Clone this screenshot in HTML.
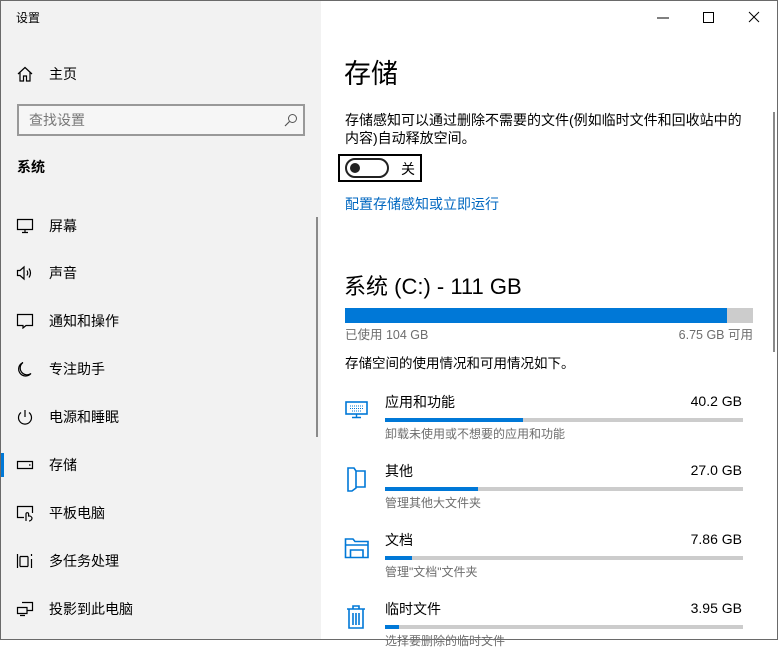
<!DOCTYPE html>
<html><head><meta charset="utf-8"><style>
*{margin:0;padding:0;box-sizing:border-box}
body{width:778px;height:640px;overflow:hidden;font-family:"Liberation Sans","Noto Sans CJK SC",sans-serif;color:#000;background:#fff;position:relative}
.a{position:absolute;white-space:nowrap}
#left{position:absolute;left:0;top:0;width:321px;height:640px;background:#f2f2f2}
.nav{font-size:14px;left:49px}
.ic{position:absolute;left:16px}
.bar{position:absolute;height:4px;background:#ccc}
.bar i{display:block;height:100%;background:#0078d7}
.sm{font-size:12px;color:#6d6d6d}
.frame{position:absolute;left:0;top:0;width:778px;height:640px;border:1px solid #6a6a6a;pointer-events:none}
</style></head><body>
<div id="left">
<div class="a" style="left:16px;top:9px;font-size:12px">设置</div>
<svg class="ic" style="top:66px" width="18" height="16" viewBox="0 0 18 16"><path d="M2 8 L9 1.5 L16 8 M4 6.5 V15 H7.5 V10 H10.5 V15 H14 V6.5" fill="none" stroke="#000" stroke-width="1.2"/></svg>
<div class="a nav" style="top:64px">主页</div>
<div style="position:absolute;left:17px;top:104px;width:288px;height:32px;border:2px solid #999;background:#f6f6f6"></div>
<div class="a" style="left:29px;top:110px;font-size:14px;color:#777">查找设置</div>
<svg class="a" style="left:284px;top:113px" width="14" height="14" viewBox="0 0 14 14"><circle cx="8.5" cy="5.5" r="4" fill="none" stroke="#555" stroke-width="1"/><path d="M5.5 8.5 L1 13" stroke="#555" stroke-width="1.2"/></svg>
<div class="a" style="left:17px;top:157px;font-size:14px;font-weight:bold">系统</div>
<div style="position:absolute;left:316px;top:217px;width:2px;height:220px;background:#8a8a8a"></div>
<svg class="ic" style="top:218px" width="18" height="16"><path d="M1.5 1.5H16.5V11.5H1.5Z M9 11.5V14 M6 14.5H12" fill="none" stroke="#000" stroke-width="1.2"/></svg>
<div class="a nav" style="top:216px">屏幕</div>
<svg class="ic" style="top:265px" width="18" height="16"><path d="M1.5 5.5H4L8 2V14L4 10.5H1.5Z M11 5.5Q12.5 8 11 10.5 M13 3.5Q16 8 13 12.5" fill="none" stroke="#000" stroke-width="1.2"/></svg>
<div class="a nav" style="top:263px">声音</div>
<svg class="ic" style="top:313px" width="18" height="16"><path d="M1.5 1.5H16.5V12.5H10L7 15V12.5H1.5Z" fill="none" stroke="#000" stroke-width="1.2"/></svg>
<div class="a nav" style="top:311px">通知和操作</div>
<svg class="ic" style="top:361px" width="18" height="17"><path d="M7 1.5A7 7 0 1 0 15 12.5 A6 6 0 0 1 7 1.5Z" fill="none" stroke="#000" stroke-width="1.2"/></svg>
<div class="a nav" style="top:359px">专注助手</div>
<svg class="ic" style="top:409px" width="18" height="17"><path d="M5 3.5A6.5 6.5 0 1 0 13 3.5 M9 1V8" fill="none" stroke="#000" stroke-width="1.2"/></svg>
<div class="a nav" style="top:407px">电源和睡眠</div>
<div style="position:absolute;left:0;top:453px;width:4px;height:24px;background:#0078d7"></div>
<svg class="ic" style="top:458px" width="18" height="14"><path d="M1.5 3.5H16.5V10.5H1.5Z M13 7H14.5" fill="none" stroke="#000" stroke-width="1.2"/></svg>
<div class="a nav" style="top:455px">存储</div>
<svg class="ic" style="top:505px" width="18" height="17"><path d="M8 12.5H1.5V1.5H16.5V8 M10 16V9A1.3 1.3 0 0 1 12.6 9V11 A3 3 0 0 1 16 13 A3 3 0 0 1 13 16" fill="none" stroke="#000" stroke-width="1.2"/></svg>
<div class="a nav" style="top:503px">平板电脑</div>
<svg class="ic" style="top:553px" width="18" height="17"><path d="M1.5 1V15 M4 3.5H12 M4 13.5H12 M4 3.5V13.5 M12 3.5V13.5 M15.5 1V3 M15.5 6V15" fill="none" stroke="#000" stroke-width="1.2"/></svg>
<div class="a nav" style="top:551px">多任务处理</div>
<svg class="ic" style="top:601px" width="18" height="16"><path d="M6 1.5H16.5V9.5H11 M1.5 6.5H11V12.5H1.5Z M4 14.5H9" fill="none" stroke="#000" stroke-width="1.2"/></svg>
<div class="a nav" style="top:599px">投影到此电脑</div>
</div>

<svg class="a" style="left:652px;top:10px" width="110" height="16"><path d="M5 8H17" stroke="#000" stroke-width="1"/><rect x="51.5" y="2.5" width="10" height="10" fill="none" stroke="#000"/><path d="M97 2L107 12M107 2L97 12" stroke="#000" stroke-width="1"/></svg>
<div style="position:absolute;left:773px;top:112px;width:2px;height:240px;background:#8a8a8a"></div>

<div class="a" style="left:344px;top:52px;font-size:27px">存储</div>
<div class="a" style="left:345px;top:111px;font-size:14px;line-height:18px">存储感知可以通过删除不需要的文件(例如临时文件和回收站中的<br>内容)自动释放空间。</div>
<div style="position:absolute;left:338px;top:154px;width:84px;height:28px;border:2px solid #000"></div>
<div style="position:absolute;left:345px;top:158px;width:44px;height:20px;border:2px solid #222;border-radius:10px"></div>
<div style="position:absolute;left:350px;top:163px;width:10px;height:10px;border-radius:50%;background:#222"></div>
<div class="a" style="left:401px;top:159px;font-size:14px">关</div>
<div class="a" style="left:345px;top:194px;font-size:14px;color:#0067c0">配置存储感知或立即运行</div>

<div class="a" style="left:344px;top:269px;font-size:22px">系统 (C:) - 111 GB</div>
<div class="bar" style="left:345px;top:308px;width:408px;height:15px"><i style="width:382px"></i></div>
<div class="a sm" style="left:345px;top:324px;font-size:12.5px">已使用 104 GB</div>
<div class="a sm" style="right:25px;top:324px;font-size:12.5px">6.75 GB 可用</div>
<div class="a" style="left:345px;top:352px;font-size:13.5px">存储空间的使用情况和可用情况如下。</div>

<svg class="a" style="left:345px;top:401px" width="24" height="18"><rect x="1" y="1" width="21" height="12" fill="none" stroke="#0078d7" stroke-width="1.6"/><path d="M11.5 13V16 M7 16.5H16" stroke="#0078d7" stroke-width="1.4"/><path d="M5 5H18 M5 7.5H18 M7 10H16" stroke="#0078d7" stroke-width="1" stroke-dasharray="1 1"/></svg>
<div class="a" style="left:385px;top:392px;font-size:14px">应用和功能</div>
<div class="a" style="right:36px;top:393px;font-size:14px">40.2 GB</div>
<div class="bar" style="left:385px;top:418px;width:358px"><i style="width:138px"></i></div>
<div class="a sm" style="left:385px;top:425px">卸载未使用或不想要的应用和功能</div>

<svg class="a" style="left:346px;top:466px" width="22" height="26"><path d="M2 2H8L10 5V22L6 25H2Z M10 5H19V21H10" fill="none" stroke="#0078d7" stroke-width="1.6"/></svg>
<div class="a" style="left:385px;top:461px;font-size:14px">其他</div>
<div class="a" style="right:36px;top:462px;font-size:14px">27.0 GB</div>
<div class="bar" style="left:385px;top:487px;width:358px"><i style="width:93px"></i></div>
<div class="a sm" style="left:385px;top:494px">管理其他大文件夹</div>

<svg class="a" style="left:344px;top:537px" width="26" height="22"><path d="M1.5 2H9L11 4.5H24V20.5H1.5Z M6.5 20.5V13H19V20.5 M1.5 8H24" fill="none" stroke="#0078d7" stroke-width="1.6"/></svg>
<div class="a" style="left:385px;top:530px;font-size:14px">文档</div>
<div class="a" style="right:36px;top:531px;font-size:14px">7.86 GB</div>
<div class="bar" style="left:385px;top:556px;width:358px"><i style="width:27px"></i></div>
<div class="a sm" style="left:385px;top:563px">管理"文档"文件夹</div>

<svg class="a" style="left:346px;top:604px" width="20" height="26"><path d="M1 5H19 M7 5V2H13V5 M3 5V24H17V5 M7 9V21 M10 9V21 M13 9V21" fill="none" stroke="#0078d7" stroke-width="1.6"/></svg>
<div class="a" style="left:385px;top:599px;font-size:14px">临时文件</div>
<div class="a" style="right:36px;top:600px;font-size:14px">3.95 GB</div>
<div class="bar" style="left:385px;top:625px;width:358px"><i style="width:14px"></i></div>
<div class="a sm" style="left:385px;top:632px">选择要删除的临时文件</div>
<div class="frame"></div>
</body></html>
